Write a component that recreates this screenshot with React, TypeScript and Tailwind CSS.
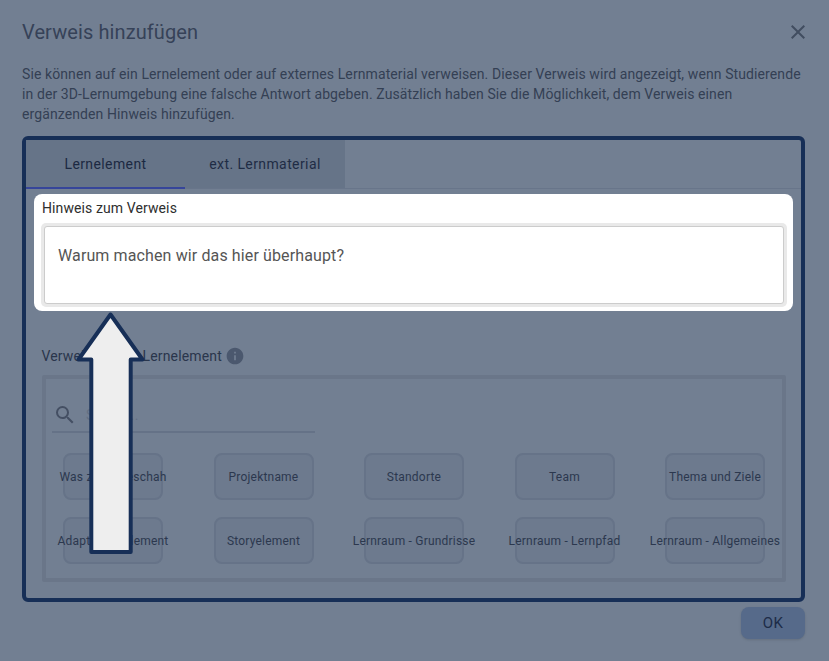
import React from "react";
import { MdClose, MdInfo, MdSearch } from "react-icons/md";

const row1 = ["Was zuvor geschah", "Projektname", "Standorte", "Team", "Thema und Ziele"];
const row2 = ["Adaptivitätselement", "Storyelement", "Lernraum - Grundrisse", "Lernraum - Lernpfad", "Lernraum - Allgemeines"];

function Row({ items }: { items: string[] }) {
  return (
    <div className="flex justify-between">
      {items.map((t) => (
        <div
          key={t}
          className="w-[100px] h-[47px] rounded-lg border-[2px] border-[#667388] bg-[#6d7a8e] flex items-center justify-center whitespace-nowrap text-[12px] font-normal tracking-[0.2px] text-[#2c384e]"
        >
          {t}
        </div>
      ))}
    </div>
  );
}

export default function App() {
  return (
    <div className="relative w-[829px] h-[661px] overflow-hidden bg-[#727f92] font-['Roboto',sans-serif] pl-[22px] pr-[24px] text-[#394559]">
      <div className="relative flex items-center justify-between h-[64px]">
        <div className="text-[20px] leading-[24px] tracking-[0.1px] text-[#364258]">Verweis hinzufügen</div>
        <MdClose className="w-[24px] h-[24px] mr-[-5px] text-[#414d60]" />
      </div>
      <p className="text-[14px] leading-[20px] tracking-[0.1px] text-[#344054]">
        Sie können auf ein Lernelement oder auf externes Lernmaterial verweisen. Dieser Verweis wird angezeigt, wenn Studierende in der 3D-Lernumgebung eine falsche Antwort abgeben. Zusätzlich haben Sie die Möglichkeit, dem Verweis einen ergänzenden Hinweis hinzufügen.
      </p>
      <div className="mt-[12px] h-[466px] w-[783px] rounded-md border-[4px] border-[#172f57] flex flex-col">
        <div className="flex h-[49px] shrink-0 border-b-[1px] border-[#68758a]">
          <div className="relative w-[159px] bg-[#667488] flex items-center justify-center text-[14px] font-normal tracking-[0.4px] text-[#1c2942]">
            Lernelement
            <div className="absolute left-0 right-0 bottom-[-1px] h-[2px] bg-[#36459a]" />
          </div>
          <div className="w-[160px] bg-[#667488] flex items-center justify-center text-[14px] font-normal tracking-[0.4px] text-[#1f2c45]">
            ext. Lernmaterial
          </div>
        </div>
        <div className="mt-[5px] ml-[8px] w-[759px] h-[117px] shrink-0 rounded-lg bg-white pl-[7px] pr-[6px] pt-[6px]">
          <div className="pl-[1px] text-[14px] leading-[16px] font-normal text-[#2e2e2e] tracking-[0.1px]">Hinweis zum Verweis</div>
          <div className="mt-[7px] h-[84px] rounded-[5px] bg-[#e9e9e9] p-[3px]">
            <div className="h-full rounded-[3px] bg-white border border-[#cccccc] pl-[13px] pt-[17px] text-[16px] leading-[24px] tracking-[0.12px] text-[#555555]">
              Warum machen wir das hier überhaupt?
            </div>
          </div>
        </div>
        <div className="mt-[34px] ml-[16px] flex items-center gap-[3px] h-[22px] text-[14px] font-normal tracking-[0.15px] text-[#2a364c]">
          <span className="-ml-[0.5px]">Verweis auf ein Lernelement</span>
          <MdInfo className="w-[20px] h-[20px] text-[#4b586e]" />
        </div>
        <div className="mt-[8px] ml-[16px] w-[744px] h-[207px] rounded-[2px] border-[4px] border-[#6a7689] px-[17px] pt-[20px]">
          <div className="w-[263px] h-[34px] -ml-[11px] border-b-[2px] border-[#657287] flex items-center pl-[1px] gap-[9px] text-[14px] tracking-[0.4px] text-[#647083]">
            <MdSearch className="w-[24px] h-[24px] text-[#444f63]" />
            Suche...
          </div>
          <div className="mt-[20px] flex flex-col gap-[17px]">
            <Row items={row1} />
            <Row items={row2} />
          </div>
        </div>
      </div>
      <div className="mt-[5px] flex justify-end">
        <div className="w-[64px] h-[32px] rounded-lg bg-[#566a8a] shadow-sm flex items-center justify-center text-[15px] font-normal tracking-[0.3px] text-[#1d2c48]">
          OK
        </div>
      </div>
      <svg className="absolute left-0 top-0 pointer-events-none" width="829" height="661" viewBox="0 0 829 661" fill="none">
        <polygon
          points="110.5,314.5 78.5,359.5 91.3,359.5 91.3,552 130.7,552 130.7,359.5 142.5,359.5"
          fill="#eeeeee"
          stroke="#172f57"
          strokeWidth="4"
          strokeLinejoin="round"
        />
      </svg>
    </div>
  );
}
